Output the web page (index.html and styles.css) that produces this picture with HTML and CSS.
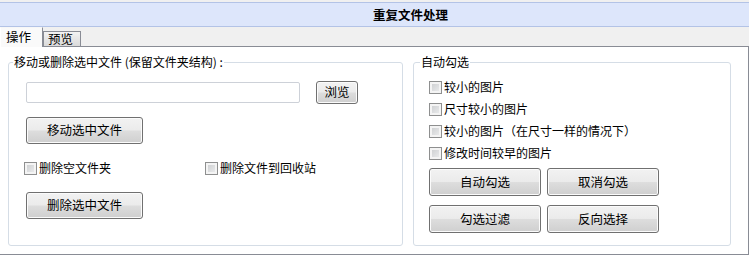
FILE: index.html
```html
<!DOCTYPE html>
<html lang="zh-CN">
<head>
<meta charset="utf-8">
<title>重复文件处理</title>
<link rel="stylesheet" href="styles.css">
</head>
<body>
<div class="title">重复文件处理</div>
<div class="tabs">
  <div class="tab active">操作</div>
  <div class="tab">预览</div>
</div>
<div class="panel">
  <fieldset class="group group-left">
    <legend>移动或删除选中文件 (保留文件夹结构) :</legend>
    <div class="group-body left-body">
      <div class="path-row">
        <div class="input"></div>
        <button class="btn browse">浏览</button>
      </div>
      <button class="btn wide move">移动选中文件</button>
      <div class="opt-row">
        <label class="check opt-a"><span class="cb"></span>删除空文件夹</label>
        <label class="check opt-b"><span class="cb"></span>删除文件到回收站</label>
      </div>
      <button class="btn wide del">删除选中文件</button>
    </div>
  </fieldset>
  <fieldset class="group group-right">
    <legend>自动勾选</legend>
    <div class="group-body right-body">
      <div class="checks">
        <label class="check"><span class="cb"></span>较小的图片</label>
        <label class="check"><span class="cb"></span>尺寸较小的图片</label>
        <label class="check"><span class="cb"></span>较小的图片（在尺寸一样的情况下）</label>
        <label class="check"><span class="cb"></span>修改时间较早的图片</label>
      </div>
      <div class="btn-grid">
        <button class="btn">自动勾选</button>
        <button class="btn">取消勾选</button>
        <button class="btn">勾选过滤</button>
        <button class="btn">反向选择</button>
      </div>
    </div>
  </fieldset>
</div>
</body>
</html>
```

FILE: styles.css
```css
* { box-sizing: border-box; }
html, body {
  margin: 0;
  padding: 0;
  background: #f0f0f0;
  font-family: "Noto Sans CJK SC", "Noto Sans", sans-serif;
  font-size: 12px;
  color: #000;
  width: 749px;
  height: 255px;
  overflow: hidden;
}
.title {
  margin-top: 2px;
  height: 25px;
  line-height: 23px;
  border-top: 1px solid #b3c3e6;
  border-bottom: 1px solid #b3c3e6;
  background: #dde6fb;
  font-weight: bold;
  font-size: 12.5px;
  text-align: center;
  padding-left: 72px;
}
.tabs {
  display: flex;
  align-items: flex-end;
  height: 19px;
}
.tab {
  width: 38px;
  height: 15px;
  line-height: 13px;
  padding: 0 4px;
  border: 1px solid #898c95;
  border-bottom: none;
  background: linear-gradient(#f3f3f3, #dadada);
  font-size: 12.5px;
}
.tab.active {
  height: 20px;
  line-height: 18px;
  width: 43px;
  padding-left: 5px;
  margin-bottom: -1px;
  background: #fafafa;
  border-color: #f7f7f7 #898c95 #898c95 #ffffff;
  position: relative;
  z-index: 1;
}
.panel {
  display: flex;
  gap: 10px;
  height: 209px;
  background: #fff;
  border-top: 1px solid #898c95;
  border-right: 1px solid #898c95;
  border-bottom: 1px solid #898c95;
  padding: 7px 0 8px 8px;
}
.group {
  margin: 0;
  padding: 0;
  min-width: 0;
  border: 1px solid #d5dde6;
  border-radius: 3px;
  height: 192px;
}
.group legend {
  font-size: 12px;
  line-height: 16px;
  padding: 0 1px;
  margin-left: 4px;
}
.group-left { width: 395px; }
.group-right { width: 318px; }
.group-right legend { margin-left: 6px; }
.left-body {
  display: flex;
  flex-direction: column;
  align-items: flex-start;
  padding: 11px 0 0 17px;
}
.right-body {
  padding: 9px 0 0 15px;
}
.path-row {
  display: flex;
  align-items: center;
  height: 22px;
}
.input {
  width: 274px;
  height: 21px;
  border: 1px solid #cdd1d8;
  border-radius: 2px;
  background: #fff;
}
.btn {
  font-family: inherit;
  font-size: 12.5px;
  color: #000;
  border: 1px solid #707070;
  border-radius: 3px;
  background: linear-gradient(#f2f2f2 0%, #ebebeb 48%, #dddddd 52%, #cfcfcf 100%);
  box-shadow: inset 0 0 0 1px #fbfbfb;
  padding: 0;
  margin: 0;
  line-height: 1;
}
.browse {
  width: 42px;
  height: 23px;
  margin-left: 16px;
}
.wide {
  width: 117px;
  height: 27px;
}
.move { margin-top: 14px; }
.opt-row {
  display: flex;
  margin-top: 16px;
  margin-left: -2px;
  height: 16px;
}
.check {
  display: flex;
  align-items: center;
  height: 16px;
  line-height: 16px;
  white-space: nowrap;
}
.cb {
  width: 13px;
  height: 13px;
  margin-right: 2px;
  border: 1px solid #8e8f8f;
  background: linear-gradient(135deg, #c9cbcd, #eff0f1);
  box-shadow: inset 0 0 0 2px #f4f4f4;
  flex: none;
}
.opt-a { width: 181px; }
.del { margin-top: 16px; }
.checks {
  display: flex;
  flex-direction: column;
  gap: 6px;
}
.btn-grid {
  display: grid;
  grid-template-columns: 112px 112px;
  grid-auto-rows: 28px;
  column-gap: 6px;
  row-gap: 9px;
  margin-top: 7px;
}
```
